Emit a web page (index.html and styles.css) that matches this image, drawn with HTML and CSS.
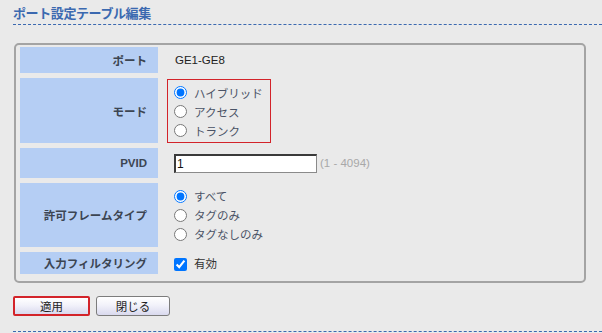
FILE: index.html
```html
<!DOCTYPE html>
<html lang="ja">
<head>
<meta charset="utf-8">
<title>ポート設定テーブル編集</title>
<link rel="stylesheet" href="styles.css">
</head>
<body>
<div class="page">
  <h1 class="title">ポート設定テーブル編集</h1>
  <div class="panel">
    <div class="grid">
      <div class="lbl">ポート</div>
      <div class="val"><span class="plain">GE1-GE8</span></div>

      <div class="lbl">モード</div>
      <div class="val val-mode">
        <div class="redbox">
          <label class="opt"><input type="radio" name="mode" checked>ハイブリッド</label>
          <label class="opt"><input type="radio" name="mode">アクセス</label>
          <label class="opt"><input type="radio" name="mode">トランク</label>
        </div>
      </div>

      <div class="lbl">PVID</div>
      <div class="val">
        <input class="txt" type="text" value="1"><span class="hint">(1 - 4094)</span>
      </div>

      <div class="lbl">許可フレームタイプ</div>
      <div class="val list">
        <label class="opt"><input type="radio" name="ft" checked>すべて</label>
        <label class="opt"><input type="radio" name="ft">タグのみ</label>
        <label class="opt"><input type="radio" name="ft">タグなしのみ</label>
      </div>

      <div class="lbl">入力フィルタリング</div>
      <div class="val list val-check">
        <label class="opt"><input type="checkbox" checked>有効</label>
      </div>
    </div>
  </div>
  <div class="buttons">
    <button class="btn btn-apply" type="button">適用</button>
    <button class="btn btn-close" type="button">閉じる</button>
  </div>
  <div class="rule"></div>
</div>
</body>
</html>
```
FILE: styles.css
```css
html, body {
  margin: 0;
  padding: 0;
  background: #eaeaea;
}
body {
  font-family: "Liberation Sans", "Noto Sans CJK JP", sans-serif;
  font-size: 11.5px;
  color: #333;
}
.page {
  padding: 5px 0 0 13px;
}
.title {
  margin: 0;
  font-size: 13px;
  line-height: 18px;
  font-weight: bold;
  color: #3b69b0;
  letter-spacing: -0.4px;
  padding-bottom: 1px;
  border-bottom: 1px dashed #3b69b0;
}
.panel {
  margin: 18px 16px 0 1px;
  border: 2px solid #a4a4a4;
  border-radius: 5px;
  padding: 2px 4px 7px 4px;
}
.grid {
  display: grid;
  grid-template-columns: 138px 1fr;
  grid-template-rows: 26px 65px 30px 64px 22px;
  row-gap: 5px;
  column-gap: 9px;
}
.lbl {
  background: #b5cef4;
  font-weight: bold;
  color: #3c4552;
  text-align: right;
  padding-right: 11px;
  display: flex;
  align-items: center;
  justify-content: flex-end;
}
.val {
  display: flex;
  align-items: center;
  padding-left: 7px;
}
.plain {
  padding-left: 1px;
  color: #222;
}
.val-mode {
  padding-left: 0;
  align-items: flex-end;
}
.redbox {
  border: 1px solid #d3242a;
  width: 104px;
  height: 64px;
  box-sizing: border-box;
  padding: 3px 0 0 6px;
  display: flex;
  flex-direction: column;
}
.list {
  flex-direction: column;
  align-items: flex-start;
  justify-content: center;
}
.opt {
  display: flex;
  align-items: center;
  height: 19px;
  color: #4a5366;
}
.opt input {
  width: 13px;
  height: 13px;
  margin: 0 7px 0 0;
}
.val-check .opt input {
  margin-top: 3px;
}
.val-check .opt {
  color: #333;
}
.txt {
  box-sizing: border-box;
  width: 143px;
  height: 19px;
  border-style: solid;
  border-width: 2px 1px 1px 2px;
  border-color: #3a3a3a #8a8a8a #8a8a8a #3a3a3a;
  background: #fff;
  font-family: "Liberation Sans", sans-serif;
  font-size: 12px;
  padding: 0 1px;
  margin: 0;
  color: #111;
}
.hint {
  color: #a8a8a8;
  margin-left: 3px;
}
.buttons {
  display: flex;
  gap: 6px;
  margin-top: 13px;
}
.btn {
  box-sizing: border-box;
  height: 20px;
  font-family: "Liberation Sans", "Noto Sans CJK JP", sans-serif;
  font-size: 11.5px;
  color: #222;
  background: linear-gradient(#ffffff, #f2f2fa 45%, #d9d9ee);
  padding: 0;
  border-radius: 2px;
}
.btn-apply {
  width: 77px;
  border: 2px solid #d3242a;
}
.btn-close {
  width: 74px;
  border: 1px solid #7c7c7c;
  border-radius: 3px;
}
.rule {
  margin-top: 15px;
  border-top: 1px dashed #3b69b0;
}
```
